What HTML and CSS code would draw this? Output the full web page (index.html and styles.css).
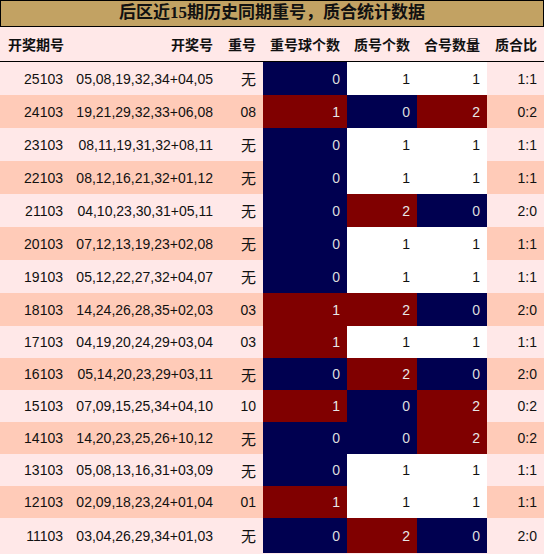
FILE: index.html
```html
<!DOCTYPE html>
<html lang="zh-CN">
<head>
  <meta charset="UTF-8">
  <title>后区近15期历史同期重号，质合统计数据</title>
  <link rel="stylesheet" href="styles.css">
</head>
<body>
  <div class="title">后区近15期历史同期重号，质合统计数据</div>
  <table class="stats">
    <colgroup>
      <col class="c-issue">
      <col class="c-nums">
      <col class="c-repeat">
      <col class="c-count">
      <col class="c-prime">
      <col class="c-comp">
      <col class="c-ratio">
    </colgroup>
    <thead>
      <tr>
        <th>开奖期号</th>
        <th>开奖号</th>
        <th>重号</th>
        <th>重号球个数</th>
        <th>质号个数</th>
        <th>合号数量</th>
        <th>质合比</th>
      </tr>
    </thead>
    <tbody>
      <tr><td>25103</td><td>05,08,19,32,34+04,05</td><td class="cn">无</td><td class="navy">0</td><td class="white">1</td><td class="white">1</td><td>1:1</td></tr>
      <tr><td>24103</td><td>19,21,29,32,33+06,08</td><td>08</td><td class="red">1</td><td class="navy">0</td><td class="red">2</td><td>0:2</td></tr>
      <tr><td>23103</td><td>08,11,19,31,32+08,11</td><td class="cn">无</td><td class="navy">0</td><td class="white">1</td><td class="white">1</td><td>1:1</td></tr>
      <tr><td>22103</td><td>08,12,16,21,32+01,12</td><td class="cn">无</td><td class="navy">0</td><td class="white">1</td><td class="white">1</td><td>1:1</td></tr>
      <tr><td>21103</td><td>04,10,23,30,31+05,11</td><td class="cn">无</td><td class="navy">0</td><td class="red">2</td><td class="navy">0</td><td>2:0</td></tr>
      <tr><td>20103</td><td>07,12,13,19,23+02,08</td><td class="cn">无</td><td class="navy">0</td><td class="white">1</td><td class="white">1</td><td>1:1</td></tr>
      <tr><td>19103</td><td>05,12,22,27,32+04,07</td><td class="cn">无</td><td class="navy">0</td><td class="white">1</td><td class="white">1</td><td>1:1</td></tr>
      <tr><td>18103</td><td>14,24,26,28,35+02,03</td><td>03</td><td class="red">1</td><td class="red">2</td><td class="navy">0</td><td>2:0</td></tr>
      <tr><td>17103</td><td>04,19,20,24,29+03,04</td><td>03</td><td class="red">1</td><td class="white">1</td><td class="white">1</td><td>1:1</td></tr>
      <tr><td>16103</td><td>05,14,20,23,29+03,11</td><td class="cn">无</td><td class="navy">0</td><td class="red">2</td><td class="navy">0</td><td>2:0</td></tr>
      <tr><td>15103</td><td>07,09,15,25,34+04,10</td><td>10</td><td class="red">1</td><td class="navy">0</td><td class="red">2</td><td>0:2</td></tr>
      <tr><td>14103</td><td>14,20,23,25,26+10,12</td><td class="cn">无</td><td class="navy">0</td><td class="navy">0</td><td class="red">2</td><td>0:2</td></tr>
      <tr><td>13103</td><td>05,08,13,16,31+03,09</td><td class="cn">无</td><td class="navy">0</td><td class="white">1</td><td class="white">1</td><td>1:1</td></tr>
      <tr><td>12103</td><td>02,09,18,23,24+01,04</td><td>01</td><td class="red">1</td><td class="white">1</td><td class="white">1</td><td>1:1</td></tr>
      <tr><td>11103</td><td>03,04,26,29,34+01,03</td><td class="cn">无</td><td class="navy">0</td><td class="red">2</td><td class="navy">0</td><td>2:0</td></tr>
    </tbody>
  </table>
</body>
</html>
```

FILE: styles.css
```css
body {
  margin: 0;
  background-color: #ffe8e8;
  font-family: 'Liberation Sans', 'Noto Sans CJK SC', sans-serif;
  color: #111;
}

.title {
  box-sizing: border-box;
  height: 27px;
  background-color: #c2a263;
  border: 1px solid #000;
  text-align: center;
  font-family: 'Liberation Serif', 'Noto Sans CJK SC', serif;
  font-weight: bold;
  font-size: 17px;
  line-height: 24px;
  color: #111;
}

.stats {
  width: 544px;
  border-collapse: collapse;
  table-layout: fixed;
}

.c-issue { width: 70px; }
.c-nums { width: 145px; }
.c-repeat { width: 48px; }
.c-count { width: 84px; }
.c-prime { width: 70px; }
.c-comp { width: 70px; }
.c-ratio { width: 57px; }

.stats th {
  height: 34px;
  padding: 0 7px 0 0;
  text-align: right;
  white-space: nowrap;
  font-family: 'Noto Sans CJK SC', sans-serif;
  font-weight: bold;
  font-size: 14px;
  background-color: #ffe8e8;
  border-bottom: 1px solid #000;
}

.stats th:first-child {
  text-align: left;
  padding: 0 0 0 8px;
}

.stats th:nth-child(2) {
  padding-right: 2px;
}

.stats td {
  height: 33px;
  padding: 0 7px 0 0;
  text-align: right;
  font-size: 14px;
  white-space: nowrap;
  background-color: #ffe8e8;
}

.stats td:nth-child(2) {
  padding-right: 2px;
}

.stats tbody tr:nth-child(even) td {
  background-color: #ffcbb8;
}

.stats tbody tr:nth-child(n+9) td {
  height: 32px;
}

.stats tbody tr:last-child td {
  height: 35px;
}

.stats td.cn {
  font-family: 'Noto Sans CJK SC', sans-serif;
  font-size: 15px;
}

.stats tbody tr td.navy {
  background-color: #000050;
  color: #dcdcdc;
}

.stats tbody tr td.red {
  background-color: #800000;
  color: #e8e8e8;
}

.stats tbody tr td.white {
  background-color: #fff;
}
```
